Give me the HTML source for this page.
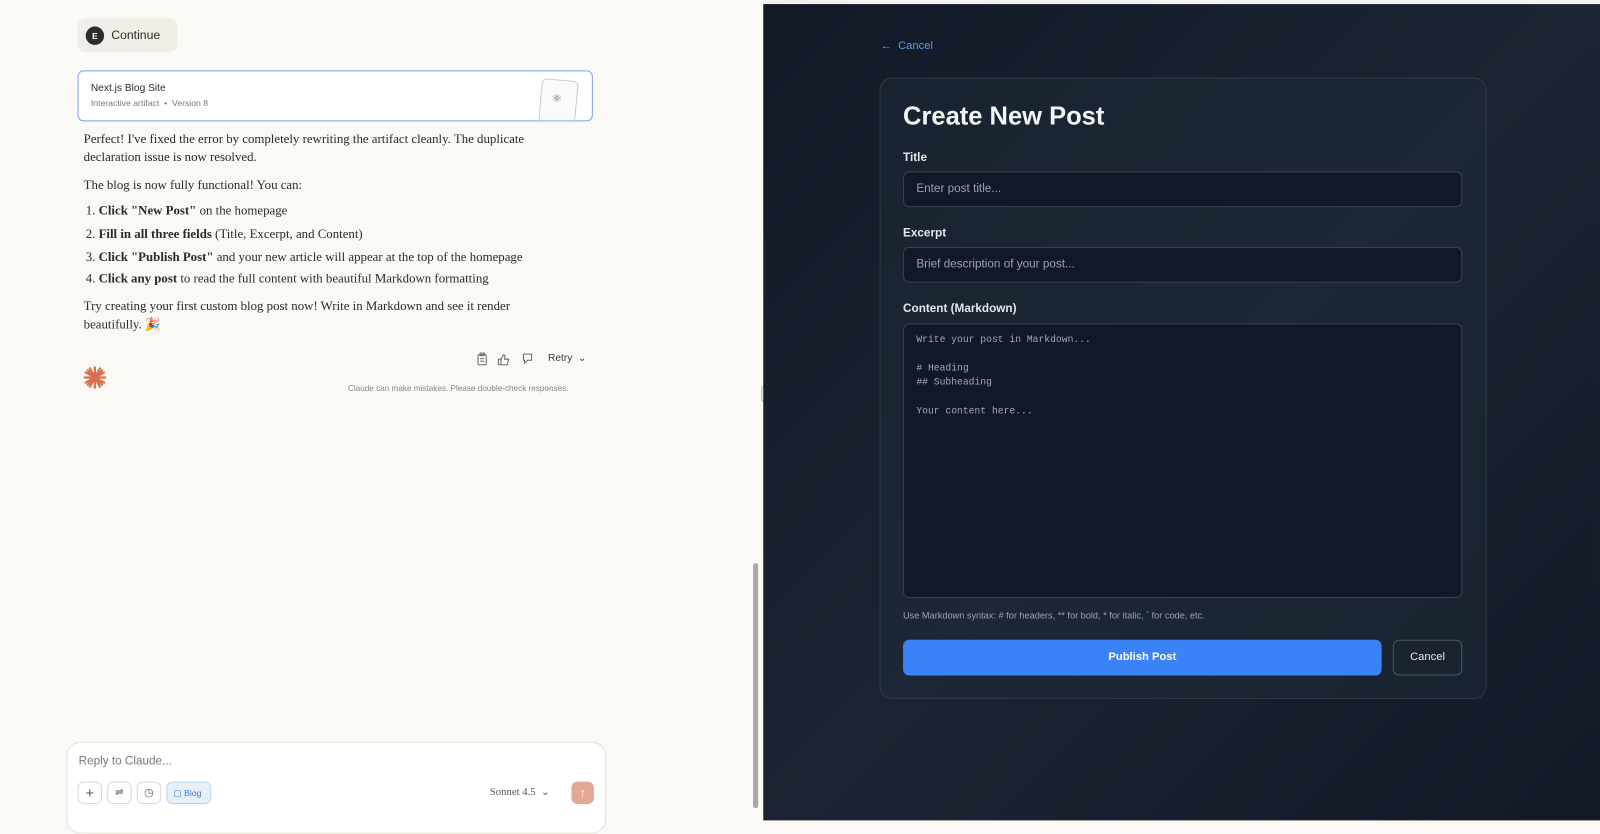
<!DOCTYPE html>
<html><head><meta charset="utf-8"><style>
*{box-sizing:border-box;margin:0;padding:0}
html,body{width:1600px;height:810px;overflow:hidden;background:#faf9f5}
body{font-family:"Liberation Sans",sans-serif}
#w{position:absolute;left:0;top:0;width:1568px;height:794px;transform:scale(1.0204);transform-origin:0 0}
.serif{font-family:"Liberation Serif",serif}
.left{position:absolute;left:0;top:0;width:748px;height:800px;background:#faf9f5}
.right{position:absolute;left:748px;top:4px;width:820px;height:800px;background:linear-gradient(135deg,#121826 0%,#1c2433 50%,#121826 100%)}
.topline{position:absolute;left:748px;top:0;width:820px;height:4px;background:#f2f2f2}
.a{position:absolute}
.txt{font-size:12.6px;color:#2b2a27;line-height:18px;white-space:nowrap}
.input{position:absolute;left:22px;width:548px;background:#111827;border:1px solid #374151;border-radius:6px;color:#9ca3af;font-size:11.5px;padding-left:12px}
.lbl{position:absolute;left:22px;color:#e5e7eb;font-size:11.5px;font-weight:bold}
.btn{position:absolute;width:24px;height:22px;border:1px solid #ddd9d0;border-radius:6px;background:#fff;top:766px}
</style></head><body><div id="w">
<div class="left">
 <div class="a" style="left:76px;top:18px;width:98px;height:33px;background:#f0eee6;border-radius:8px"></div>
 <div class="a" style="left:84px;top:26px;width:18px;height:18px;border-radius:50%;background:#2c2c2a;color:#fff;font-size:8.5px;font-weight:bold;text-align:center;line-height:18px">E</div>
 <div class="a" style="left:109px;top:27px;font-size:12px;color:#2b2a27">Continue</div>
 <div class="a" style="left:76px;top:69px;width:505px;height:50px;border:1px solid #7aa2e0;border-radius:6px;background:#fff;overflow:hidden">
  <div class="a" style="left:12px;top:11px;font-size:10px;color:#2b2a27">Next.js Blog Site</div>
  <div class="a" style="left:12px;top:26px;font-size:8.5px;color:#7a776f">Interactive artifact &nbsp;•&nbsp; Version 8</div>
  <div class="a" style="left:452px;top:8px;width:36px;height:50px;border:1px solid #ccc;border-radius:5px;transform:rotate(5deg);background:#fafafa"></div>
  <div class="a" style="left:464px;top:20px;font-size:11px;color:#555">⚛</div>
 </div>
 <div class="a serif txt" style="left:82px;top:127px">Perfect! I've fixed the error by completely rewriting the artifact cleanly. The duplicate<br>declaration issue is now resolved.</div>
 <div class="a serif txt" style="left:82px;top:172px">The blog is now fully functional! You can:</div>
 <div class="a serif txt" style="left:84px;top:197px">1. <b>Click "New Post"</b> on the homepage</div>
 <div class="a serif txt" style="left:84px;top:220px">2. <b>Fill in all three fields</b> (Title, Excerpt, and Content)</div>
 <div class="a serif txt" style="left:84px;top:243px">3. <b>Click "Publish Post"</b> and your new article will appear at the top of the homepage</div>
 <div class="a serif txt" style="left:84px;top:264px">4. <b>Click any post</b> to read the full content with beautiful Markdown formatting</div>
 <div class="a serif txt" style="left:82px;top:291px">Try creating your first custom blog post now! Write in Markdown and see it render<br>beautifully. 🎉</div>
 <svg class="a" style="left:466px;top:345px" width="64" height="14" viewBox="0 0 64 14" fill="none" stroke="#6b6a66" stroke-width="1">
  <rect x="2.5" y="2.5" width="8" height="10" rx="1"/><rect x="4.5" y="1" width="4" height="2.5"/><path d="M4.5 6.5h4M4.5 9h4"/>
  <path d="M25 12.5h6l1.5-5.5h-4l.5-3.5-1.5-1-2.5 4.5zM22.5 7h2.5v5.5h-2.5z"/>
  <path d="M47 2h8v6h-4l-3 3v-3h-1z"/>
 </svg>
 <div class="a" style="left:537px;top:346px;font-size:10px;color:#3d3c38">Retry &nbsp;⌄</div>
 <svg class="a" style="left:81px;top:358px" width="24" height="24" viewBox="0 0 24 24" stroke="#d9704f" stroke-width="2.2" stroke-linecap="round"><path d="M12 2v20M2 12h20M5 5l14 14M19 5L5 19M7 3l10 18M17 3L7 21M3 7l18 10M21 7L3 17"/></svg>
 <div class="a" style="left:341px;top:376px;font-size:8px;color:#8a8780">Claude can make mistakes. Please double-check responses.</div>
 <div class="a" style="left:65px;top:727px;width:529px;height:90px;background:#fff;border:1px solid #e5e2da;border-radius:14px"></div>
 <div class="a" style="left:77px;top:740px;font-size:11.5px;color:#7a776f">Reply to Claude...</div>
 <div class="btn" style="left:76px;text-align:center;font-size:14px;color:#555;line-height:20px">+</div>
 <div class="btn" style="left:105px;text-align:center;font-size:10px;color:#555;line-height:20px">⇌</div>
 <div class="btn" style="left:134px;text-align:center;font-size:11px;color:#555;line-height:20px">◷</div>
 <div class="a" style="left:163px;top:766px;width:44px;height:22px;border:1px solid #bcd4f0;background:#e6f0fb;border-radius:6px;font-size:8.5px;color:#3b7ad0;line-height:20px;padding-left:6px">▢ Blog</div>
 <div class="a serif" style="left:480px;top:770px;font-size:10.5px;color:#555">Sonnet 4.5 &nbsp;⌄</div>
 <div class="a" style="left:560px;top:766px;width:22px;height:22px;border-radius:6px;background:#e3a893;color:#fff;font-size:12px;text-align:center;line-height:22px">↑</div>
 <div class="a" style="left:738px;top:552px;width:5px;height:240px;background:#a9a8a4;border-radius:3px"></div>
 <div class="a" style="left:746px;top:378px;width:5px;height:16px;background:#eee;border-radius:3px;border:1px solid #bbb"></div>
</div>
<div class="topline"></div>
<div class="right">
 <div class="a" style="left:115px;top:35px;font-size:11px;color:#5b9bf5">←&nbsp; Cancel</div>
 <div class="a" style="left:114px;top:72px;width:595px;height:609px;border:1px solid #2f3847;border-radius:12px;background:rgba(31,41,55,0.55)">
  <div class="a" style="left:22px;top:23px;font-size:25px;font-weight:bold;color:#f3f4f6">Create New Post</div>
  <div class="lbl" style="top:72px">Title</div>
  <div class="input" style="top:91px;height:35px;line-height:33px">Enter post title...</div>
  <div class="lbl" style="top:146px">Excerpt</div>
  <div class="input" style="top:165px;height:35px;line-height:33px">Brief description of your post...</div>
  <div class="lbl" style="top:220px">Content (Markdown)</div>
  <div class="input" style="top:240px;height:269px;font-family:'Liberation Mono',monospace;font-size:9.5px;line-height:14px;padding-top:8px;color:#a3a9b3;white-space:pre">Write your post in Markdown...

# Heading
## Subheading

Your content here...</div>
  <div class="a" style="left:22px;top:521px;font-size:9px;color:#9ca3af">Use Markdown syntax: # for headers, ** for bold, * for italic, ` for code, etc.</div>
  <div class="a" style="left:22px;top:550px;width:469px;height:35px;background:#3b82f6;border-radius:6px;color:#fff;font-size:11px;font-weight:bold;text-align:center;line-height:35px">Publish Post</div>
  <div class="a" style="left:502px;top:550px;width:68px;height:35px;border:1px solid #4b5563;border-radius:6px;color:#e5e7eb;font-size:11px;text-align:center;line-height:33px">Cancel</div>
 </div>
</div>
</div></body></html>
